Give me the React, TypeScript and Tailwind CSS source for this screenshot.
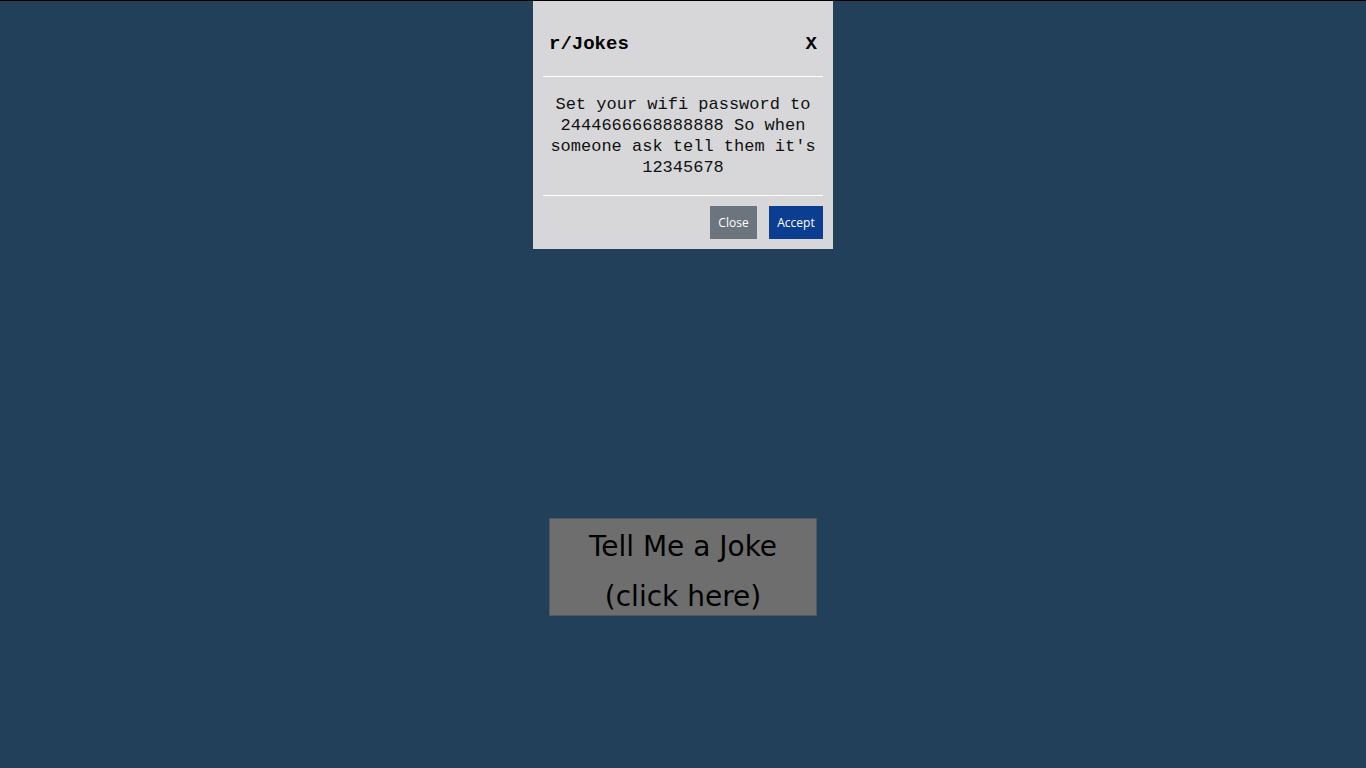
import React from 'react';

const mono = { fontFamily: '"Liberation Mono", "Courier New", monospace' };

const JokeModal = () => {
  return (
    <div className="w-[300px] bg-[#d7d7d9] mx-auto px-[10px]" style={mono}>
      <div className="flex items-center justify-between h-[75px] px-[6px] pt-[12px]">
        <span className="text-[19px] font-bold text-black">r/Jokes</span>
        <span className="text-[19px] font-bold text-black">X</span>
      </div>
      <div className="border-t border-white" />
      <p className="text-[17px] leading-[21px] text-center text-[#111] pt-[17px] pb-[17px]">
        Set your wifi password to 2444666668888888 So when someone ask tell them it's 12345678
      </p>
      <div className="border-t border-white" />
      <div className="flex justify-end gap-[12px] pt-[10px] pb-[10px]" style={{ fontFamily: '"Open Sans", sans-serif' }}>
        <button className="h-[33px] w-[47px] bg-[#6c757d] text-white text-[12px]">Close</button>
        <button className="h-[33px] w-[54px] bg-[#0b3d91] text-white text-[12px]">Accept</button>
      </div>
    </div>
  );
};

export default function App() {
  return (
    <div className="min-h-screen bg-[#23405a] border-t border-black flex flex-col">
      <JokeModal />
      <button
        className="mx-auto mt-[269px] w-[268px] h-[98px] pt-[10px] bg-[#6e6e6e] border border-[#505a64] text-black text-[28px] leading-[50px] flex flex-col items-center justify-center"
        style={{ fontFamily: '"DejaVu Sans", Verdana, sans-serif' }}
      >
        <span>Tell Me a Joke</span>
        <span>(click here)</span>
      </button>
    </div>
  );
}
